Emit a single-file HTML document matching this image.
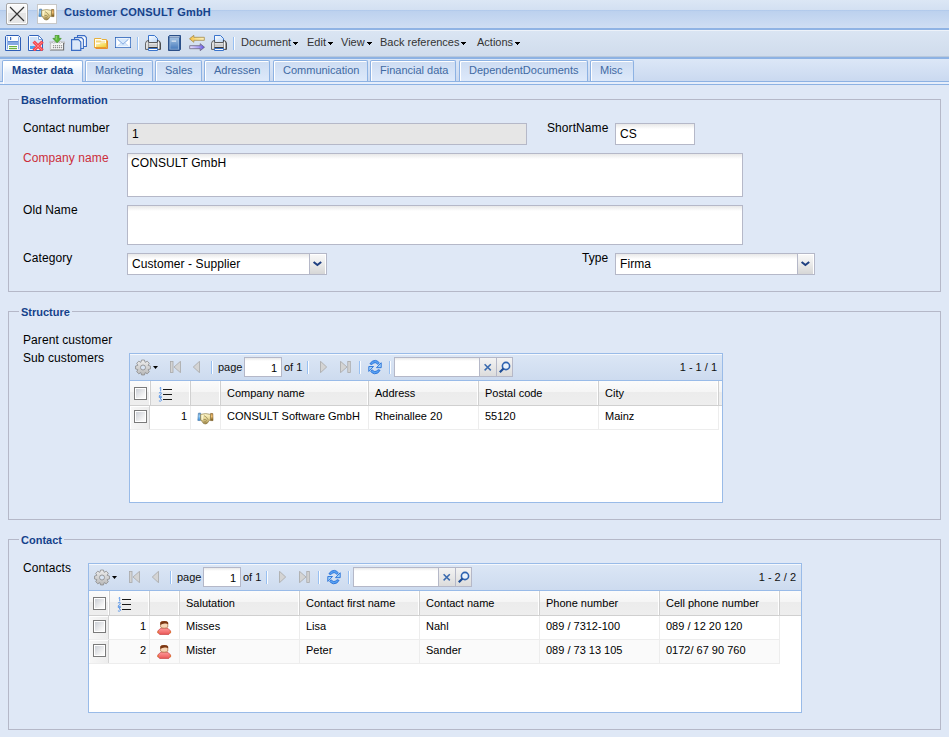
<!DOCTYPE html>
<html><head><meta charset="utf-8">
<style>
*{box-sizing:border-box;margin:0;padding:0}
html,body{width:949px;height:737px;overflow:hidden;background:#dfe8f6;font-family:"Liberation Sans",sans-serif;}
.a{position:absolute}
.t{position:absolute;white-space:nowrap;line-height:1}
#hdr{left:0;top:0;width:949px;height:30px;background:linear-gradient(#dce7f5 0,#d3e0f2 10px,#a9c4e9 10px,#bcd1ee 11px,#cfdef3 28px,#8fb3e4 28px,#8fb3e4 30px);}
#tb{left:0;top:30px;width:949px;height:27px;background:linear-gradient(#edf2f9 0,#edf2f9 1px,#dae5f3 1px,#d0dcec 26px,#b8c8dc 26px);}
#tabs{left:0;top:57px;width:949px;height:28px;background:linear-gradient(#8db2e3 0,#8db2e3 2px,#dce7f7 2px,#cad9f0 24px,#8db2e3 24px,#8db2e3 25px,#e6eefb 25px,#e6eefb 27px,#8db2e3 27px);}
.fs{position:absolute;border:1px solid #b5b8c8;}
.lg{position:absolute;font-weight:bold;font-size:11px;color:#15428b;background:#dfe8f6;padding:0 2px 0 2px;line-height:1}
.lbl{position:absolute;font-size:12px;color:#000;line-height:1;white-space:nowrap;letter-spacing:.08px}
.fld{position:absolute;border:1px solid #b5b8c8;background:#fff linear-gradient(#e8e8e8,#fff 5px);font-size:12px;color:#000}
.fld span{position:absolute;left:4px;line-height:1;white-space:nowrap;letter-spacing:.08px}
.trig{position:absolute;right:-1px;top:-1px;width:18px;bottom:-1px;border:1px solid #b5b8c8;background:linear-gradient(#f9f9f9,#ececec 45%,#d6d6d6);box-shadow:inset -1px 1px #fff}
.tab{position:absolute;top:60px;height:21px;border:1px solid #8db2e3;border-bottom:none;border-radius:2px 2px 0 0;background:linear-gradient(#cddcf2,#dde9fa);box-shadow:inset 1px 1px #fff;font-size:11px;color:#416aa3;}
.tab span{position:absolute;top:4px;line-height:1;white-space:nowrap;left:9px}
.tab.act{height:22px;background:linear-gradient(#ffffff 0,#fdfeff 4px,#e4eefb 12px,#dfeafb);color:#15428b;font-weight:bold}
.menu{position:absolute;top:37px;font-size:11px;color:#333;line-height:1;white-space:nowrap}
.arr{display:inline-block;margin-left:2px;vertical-align:1px}
.sep{position:absolute;width:2px;background:linear-gradient(90deg,#98c0f2 1px,#fbfdff 1px)}
.grid{position:absolute;border:1px solid #99bbe8;background:#fff;overflow:hidden}
.gtb{position:absolute;left:0;top:0;right:0;height:27px;border-bottom:1px solid #99bbe8;background:linear-gradient(#f5f8fd 0,#f5f8fd 1px,#dbe6f5 1px,#cddbef)}
.ghd{position:absolute;left:0;right:0;top:27px;height:25px;background:linear-gradient(#fbfbfb 0,#f5f5f5 11px,#ececec 11px,#eeeeee 24px);border-bottom:1px solid #d0d0d0}
.hc{position:absolute;top:0;height:24px;border-right:1px solid #d0d0d0;box-shadow:inset -1px 0 #fff;font-size:11px;color:#000}
.hc span{position:absolute;top:7px;left:6px;line-height:1;white-space:nowrap}
.rc span{position:absolute;top:5px;left:6px;line-height:1;white-space:nowrap}
.rck{background:linear-gradient(90deg,#f7f7f7,#ededed);box-shadow:inset 1px 1px #fff;border-right:1px solid #d4d4d4 !important}
.row{position:absolute;left:0;height:24px;border-bottom:1px solid #ededed}
.rc{position:absolute;top:0;height:23px;border-right:1px solid #ededed;font-size:11px;color:#000}
.cb{position:absolute;width:13px;height:13px;border:1px solid #7a7a7a;background:linear-gradient(135deg,#c6cad2,#f4f4f4 70%,#fff);box-shadow:inset 0 0 0 1px #fff}
.gt{position:absolute;top:8px;font-size:11px;color:#111;line-height:1;white-space:nowrap}
.pin{position:absolute;top:3px;height:20px;border:1px solid #b5b8c8;background:#fff linear-gradient(#e9e9e9,#fff 3px);font-size:11px;color:#000}
.pin span{position:absolute;top:5px;line-height:1}
.strig{position:absolute;top:3px;width:17px;height:20px;border:1px solid #b5b8c8;background:linear-gradient(#f3f3f3,#dcdcdc);}
.strig svg{position:absolute;left:0;top:0}
</style></head>
<body>
<!-- header -->
<div id="hdr" class="a"></div>
<div class="a" style="left:6px;top:3px;width:22px;height:22px;border:1px solid #a8a8a8;border-radius:2px;box-shadow:inset 0 0 0 1px #fff;background:linear-gradient(#fafafa 0,#f2f2f2 9px,#e4e4e4 9px,#e6e6e6)">
<svg width="20" height="20" style="position:absolute;left:0;top:0"><path d="M3 3L17 17M17 3L3 17" stroke="#333" stroke-width="1.2"/></svg></div>
<div class="a" style="left:37px;top:4px;width:20px;height:20px;border:1px solid #c8c8c8;background:#fff"></div>
<svg class="a" style="left:38px;top:8px" width="17" height="13" viewBox="0 0 17 13"><defs><linearGradient id="hh1" x1="0" y1="0" x2="0" y2="1"><stop offset="0" stop-color="#fff8cc"/><stop offset=".45" stop-color="#eadb9c"/><stop offset="1" stop-color="#a48a48"/></linearGradient><linearGradient id="hh1b" x1="0" y1="0" x2="0" y2="1"><stop offset="0" stop-color="#5a8ec0"/><stop offset=".4" stop-color="#9ad4fa"/><stop offset="1" stop-color="#3a8ad8"/></linearGradient><linearGradient id="hh1o" x1="0" y1="0" x2="0" y2="1"><stop offset="0" stop-color="#c08840"/><stop offset=".4" stop-color="#fcc878"/><stop offset="1" stop-color="#6a5010"/></linearGradient></defs><path d="M1.4 1.2L3.6 1L3.4 8.6L.8 8.4Z" fill="url(#hh1b)" stroke="#4a78a8" stroke-width=".6"/><path d="M13.6 1.4L15.8 1.6L16 8.6L13.4 8.6Z" fill="url(#hh1o)" stroke="#7a5a20" stroke-width=".6"/><path d="M3.7 2.4Q8.5 .8 13.5 2.4L13.4 7.6Q12.2 8.4 11.6 9.4Q10.3 12.1 8.2 12Q5.8 11.8 5.2 9.6Q4 8.6 3.6 8Z" fill="url(#hh1)" stroke="#7a6a38" stroke-width=".6"/><path d="M5.2 3.2V8" stroke="#fffbe0" stroke-width="1"/><path d="M7 3.6Q9.5 4.6 11.2 7.8M6.6 7.6Q8.2 6.6 9.8 8.6M7.2 10Q8.5 9.2 9.5 10.6" fill="none" stroke="#8a7a48" stroke-width=".7"/></svg>
<div class="t" style="left:64px;top:7px;font-size:11px;font-weight:bold;color:#15428b;letter-spacing:.2px">Customer CONSULT GmbH</div>

<!-- toolbar -->
<div id="tb" class="a"></div>

<!-- toolbar icons -->
<svg class="a" style="left:5px;top:35px" width="16" height="16" viewBox="0 0 16 16">
 <path d="M1.5 .5H13.5L15.5 2.5V15.5H.5V1.5Z" fill="#e4edfa" stroke="#2d5db6" stroke-width="1"/>
 <rect x="2" y="2" width="1" height="12" fill="#8eb0e8"/><rect x="13" y="2" width="1" height="12" fill="#8eb0e8"/>
 <rect x="3" y="1" width="10" height="5" fill="#fbfcfe"/>
 <rect x="5" y="2" width="1.2" height="3" fill="#3f6fc2"/>
 <rect x="3" y="6" width="10" height="1" fill="#5f8ad2"/>
 <rect x="3" y="7" width="10" height="3" fill="#86a9e2"/>
 <rect x="3" y="10" width="10" height="5" fill="#ffffff"/>
 <rect x="4" y="11" width="8" height="1.2" fill="#6cb342"/>
 <rect x="4" y="13" width="8" height="1.2" fill="#6cb342"/>
</svg>
<svg class="a" style="left:28px;top:35px" width="16" height="16" viewBox="0 0 16 16">
 <path d="M1.5 .5H10.5L14.5 4.5V15.5H.5V1.5Z" fill="#fafcff" stroke="#2f62bc" stroke-width="1"/>
 <path d="M2 2H9.5V5H13.5V12H2Z" fill="#cfe1f7"/>
 <path d="M10.5 1V4.5H14" fill="#fff" stroke="#5a8ad0" stroke-width=".8"/>
 <rect x="2" y="11" width="5" height="3" fill="#4aa2f0"/>
 <path d="M5.6 6.6L14.6 15.4M14.6 6.6L5.6 15.4" stroke="#f5484e" stroke-width="3.3"/>
 <path d="M6.2 7.2L14 14.8M14 7.2L6.2 14.8" stroke="#ff8084" stroke-width="1"/>
</svg>
<svg class="a" style="left:49px;top:35px" width="16" height="16" viewBox="0 0 16 16">
 <path d="M.3 7.2H15.7V8.6H15V9.3" fill="none" stroke="#bdbdbd" stroke-width="1.2"/>
 <path d="M1.5 8.5V15H14.6V8" fill="#f6f6f6" stroke="#6e6e6e" stroke-width="1.1"/>
 <path d="M1.5 8.5V15" stroke="#c8c8c8" stroke-width="1.1"/>
 <g fill="#8c8c8c"><rect x="3.9" y="10.1" width="1.2" height="1.2"/><rect x="5.9" y="10.1" width="1.2" height="1.2"/><rect x="7.9" y="10.1" width="1.2" height="1.2"/><rect x="9.9" y="10.1" width="1.2" height="1.2"/><rect x="11.9" y="10.1" width="1.2" height="1.2"/>
 <rect x="3.9" y="12" width="1.2" height="1.2"/><rect x="5.9" y="12" width="1.2" height="1.2"/><rect x="7.9" y="12" width="1.2" height="1.2"/><rect x="9.9" y="12" width="1.2" height="1.2"/><rect x="11.9" y="12" width="1.2" height="1.2"/></g>
 <circle cx="4.8" cy="7.3" r="1" fill="#fff" stroke="#999" stroke-width=".5"/><circle cx="11.4" cy="7.3" r="1" fill="#fff" stroke="#999" stroke-width=".5"/>
 <path d="M6.2 .2H10V3.4H12.2L8.1 7.8L3.9 3.4H6.2Z" fill="#5db83a" stroke="#3d8e22" stroke-width=".7"/>
 <path d="M7.2 1V4.8" stroke="#a8e090" stroke-width=".8"/>
</svg>
<svg class="a" style="left:71px;top:35px" width="16" height="16" viewBox="0 0 16 16">
 <path d="M6.5 .6H13.5L15.4 2.5V11.5H6.5Z" fill="#f4f8fe" stroke="#3a6cc4" stroke-width="1.1"/>
 <path d="M3.5 2.6H10.5L12.4 4.5V13.5H3.5Z" fill="#f4f8fe" stroke="#3a6cc4" stroke-width="1.1"/>
 <path d="M.6 4.6H7.5L9.8 6.9V15.4H.6Z" fill="#dbe8f9" stroke="#3a6cc4" stroke-width="1.2"/>
</svg>
<svg class="a" style="left:93px;top:37px" width="16" height="13" viewBox="0 0 16 13">
 <defs><linearGradient id="fg" x1="0" y1="0" x2="1" y2="1"><stop offset="0" stop-color="#fdf3c0"/><stop offset="1" stop-color="#f2cf2a"/></linearGradient></defs>
 <path d="M2.5 11.5H14.5V3.5" fill="none" stroke="#e8902e" stroke-width="1"/>
 <path d="M1.5 1.5H8L9 2.5H13.5V10.5H1.5Z" fill="#fffdf2" stroke="#e6b03e" stroke-width="1"/>
 <path d="M3 3.5H7.5L8.5 4.5H12V5.5H3Z" fill="#f3d67a"/>
 <path d="M3 7H6.5L7.5 6H13V10H3Z" fill="url(#fg)"/>
 <path d="M1.5 10.5H13.5" stroke="#e89a30" stroke-width="1"/>
</svg>
<svg class="a" style="left:115px;top:37px" width="16" height="11" viewBox="0 0 16 11">
 <rect x=".5" y=".5" width="15" height="10" fill="#ffffff" stroke="#2f64b8" stroke-width="1"/>
 <path d="M1 1.2H15V10H1Z" fill="none" stroke="#cfe2fb" stroke-width=".6"/>
 <path d="M2.5 9L7 6L9 6L13.5 9M2.5 2L8 7L13.5 2Z" fill="#d6e8fc"/>
 <path d="M2.5 2.2L8 7.2L13.5 2.2" fill="none" stroke="#7aa4e0" stroke-width="1"/>
 <path d="M2.5 9L6 6M13.5 9L10 6" fill="none" stroke="#b4cff2" stroke-width=".8"/>
</svg>
<svg class="a" style="left:145px;top:35px" width="16" height="16" viewBox="0 0 16 16">
 <defs><linearGradient id="paa" x1="0" y1="0" x2="1" y2="0"><stop offset="0" stop-color="#bbb"/><stop offset=".4" stop-color="#fff"/><stop offset="1" stop-color="#aaa"/></linearGradient>
 <linearGradient id="pab" x1="0" y1="0" x2="1" y2="0"><stop offset="0" stop-color="#ccc"/><stop offset=".45" stop-color="#fff"/><stop offset="1" stop-color="#444"/></linearGradient>
 <linearGradient id="pac" x1="0" y1="0" x2="0" y2="1"><stop offset="0" stop-color="#fafafa"/><stop offset=".5" stop-color="#c6c6c6"/><stop offset="1" stop-color="#e6e6e6"/></linearGradient>
 <linearGradient id="pap" x1="0" y1="0" x2="1" y2="1"><stop offset="0" stop-color="#ffffff"/><stop offset="1" stop-color="#b8d4f6"/></linearGradient></defs>
 <path d="M3.5 .5H9.5L12.5 3.5V8H3.5Z" fill="url(#pap)" stroke="#3a74cc" stroke-width="1"/>
 <path d="M.6 14.4V8.3Q.8 5.6 3.6 5.4V14.4Z" fill="url(#paa)" stroke="#3c3c3c" stroke-width=".8"/>
 <path d="M15.4 14.4V8.3Q15.2 5.6 12.4 5.4V14.4Z" fill="url(#pab)" stroke="#2a2a2a" stroke-width=".8"/>
 <rect x="3.5" y="7" width="9" height="6.5" fill="url(#pac)"/>
 <rect x="3.5" y="7" width="9" height="1" fill="#5a5a5a"/>
 <rect x="3.5" y="12" width="9" height="1" fill="#3a3a3a"/>
 <path d="M3.5 13.5H12.5V15.5H3.5Z" fill="#fafafa" stroke="#3a74cc" stroke-width="1"/>
</svg>
<svg class="a" style="left:168px;top:35px" width="13" height="16" viewBox="0 0 13 16">
 <defs><linearGradient id="bk" x1="0" y1="0" x2="0" y2="1"><stop offset="0" stop-color="#9cbde0"/><stop offset="1" stop-color="#4a7dbd"/></linearGradient></defs>
 <path d="M1.5 .5H12.5V14.5L11.5 15.5H.5V1.5Z" fill="#34609e" stroke="#2a4f88" stroke-width="1"/>
 <rect x="1.5" y="1.4" width="10" height="1" fill="#f4f7fb"/>
 <rect x="1.5" y="3" width="9.5" height="11.5" fill="#9dbcdf"/>
 <rect x="2.3" y="3.8" width="8" height="10" fill="url(#bk)"/>
 <rect x="3.6" y="5.6" width="4.5" height="1" fill="#f0f5fb"/>
</svg>
<svg class="a" style="left:189px;top:35px" width="16" height="16" viewBox="0 0 16 16">
 <defs><linearGradient id="ay" x1="0" y1="0" x2="1" y2="0"><stop offset="0" stop-color="#f4b838"/><stop offset=".4" stop-color="#fbdc80"/><stop offset="1" stop-color="#fdf2c0"/></linearGradient>
 <linearGradient id="ap" x1="0" y1="0" x2="1" y2="0"><stop offset="0" stop-color="#e6e2ff"/><stop offset=".6" stop-color="#a89cf4"/><stop offset="1" stop-color="#5a4ae0"/></linearGradient></defs>
 <path d="M.5 3.8L4.8 .3V2.3H15.3V5.3H4.8V7.3Z" fill="url(#ay)" stroke="#a58a4a" stroke-width=".8" stroke-linejoin="round"/>
 <path d="M15.5 12.2L11.2 8.7V10.7H.7V13.7H11.2V15.7Z" fill="url(#ap)" stroke="#6a6480" stroke-width=".8" stroke-linejoin="round"/>
</svg>
<svg class="a" style="left:211px;top:35px" width="16" height="16" viewBox="0 0 16 16">
 <defs><linearGradient id="pba" x1="0" y1="0" x2="1" y2="0"><stop offset="0" stop-color="#bbb"/><stop offset=".4" stop-color="#fff"/><stop offset="1" stop-color="#aaa"/></linearGradient>
 <linearGradient id="pbb" x1="0" y1="0" x2="1" y2="0"><stop offset="0" stop-color="#ccc"/><stop offset=".45" stop-color="#fff"/><stop offset="1" stop-color="#444"/></linearGradient>
 <linearGradient id="pbc" x1="0" y1="0" x2="0" y2="1"><stop offset="0" stop-color="#fafafa"/><stop offset=".5" stop-color="#c6c6c6"/><stop offset="1" stop-color="#e6e6e6"/></linearGradient>
 <linearGradient id="pbp" x1="0" y1="0" x2="1" y2="1"><stop offset="0" stop-color="#ffffff"/><stop offset="1" stop-color="#b8d4f6"/></linearGradient></defs>
 <path d="M3.5 .5H9.5L12.5 3.5V8H3.5Z" fill="url(#pbp)" stroke="#3a74cc" stroke-width="1"/>
 <path d="M.6 14.4V8.3Q.8 5.6 3.6 5.4V14.4Z" fill="url(#pba)" stroke="#3c3c3c" stroke-width=".8"/>
 <path d="M15.4 14.4V8.3Q15.2 5.6 12.4 5.4V14.4Z" fill="url(#pbb)" stroke="#2a2a2a" stroke-width=".8"/>
 <rect x="3.5" y="7" width="9" height="6.5" fill="url(#pbc)"/>
 <rect x="3.5" y="7" width="9" height="1" fill="#5a5a5a"/>
 <rect x="3.5" y="12" width="9" height="1" fill="#3a3a3a"/>
 <path d="M3.5 13.5H12.5V15.5H3.5Z" fill="#fafafa" stroke="#3a74cc" stroke-width="1"/>
</svg>
<div class="sep" style="left:137px;top:37px;height:13px"></div>
<div class="sep" style="left:233px;top:37px;height:13px"></div>
<div class="menu" style="left:241px">Document<svg class="arr" width="5" height="3" viewBox="0 0 5 3"><rect x="0" y="0" width="5" height="1" fill="#000"/><rect x="1" y="1" width="3" height="1" fill="#000"/><rect x="2" y="2" width="1" height="1" fill="#000"/></svg></div>
<div class="menu" style="left:307px">Edit<svg class="arr" width="5" height="3" viewBox="0 0 5 3"><rect x="0" y="0" width="5" height="1" fill="#000"/><rect x="1" y="1" width="3" height="1" fill="#000"/><rect x="2" y="2" width="1" height="1" fill="#000"/></svg></div>
<div class="menu" style="left:341px">View<svg class="arr" width="5" height="3" viewBox="0 0 5 3"><rect x="0" y="0" width="5" height="1" fill="#000"/><rect x="1" y="1" width="3" height="1" fill="#000"/><rect x="2" y="2" width="1" height="1" fill="#000"/></svg></div>
<div class="menu" style="left:380px">Back references<svg class="arr" width="5" height="3" viewBox="0 0 5 3"><rect x="0" y="0" width="5" height="1" fill="#000"/><rect x="1" y="1" width="3" height="1" fill="#000"/><rect x="2" y="2" width="1" height="1" fill="#000"/></svg></div>
<div class="menu" style="left:477px">Actions<svg class="arr" width="5" height="3" viewBox="0 0 5 3"><rect x="0" y="0" width="5" height="1" fill="#000"/><rect x="1" y="1" width="3" height="1" fill="#000"/><rect x="2" y="2" width="1" height="1" fill="#000"/></svg></div>

<!-- tabs -->
<div id="tabs" class="a"></div>
<div class="tab act" style="left:2px;width:81px"><span style="left:9px">Master data</span></div>
<div class="a" style="left:3px;top:81px;width:79px;height:3px;background:linear-gradient(#dfeafb 0,#dfeafb 1px,#e6eefb 1px);box-shadow:inset 1px 0 #fff"></div>
<div class="tab" style="left:85px;width:68px"><span>Marketing</span></div>
<div class="tab" style="left:155px;width:47px"><span>Sales</span></div>
<div class="tab" style="left:204px;width:66px"><span>Adressen</span></div>
<div class="tab" style="left:273px;width:95px"><span>Communication</span></div>
<div class="tab" style="left:370px;width:86px"><span>Financial data</span></div>
<div class="tab" style="left:459px;width:129px"><span>DependentDocuments</span></div>
<div class="tab" style="left:590px;width:44px"><span>Misc</span></div>

<!-- fieldset 1 -->
<div class="fs" style="left:8px;top:99px;width:933px;height:193px"></div>
<div class="lg" style="left:19px;top:95px">BaseInformation</div>
<div class="lbl" style="left:23px;top:122px">Contact number</div>
<div class="fld" style="left:127px;top:123px;width:400px;height:22px;background:#e6e6e6"><span style="top:4px">1</span></div>
<div class="lbl" style="left:547px;top:122px">ShortName</div>
<div class="fld" style="left:615px;top:123px;width:80px;height:22px"><span style="top:4px">CS</span></div>
<div class="lbl" style="left:23px;top:152px;color:#cc2e3a">Company name</div>
<div class="fld" style="left:127px;top:153px;width:616px;height:44px"><span style="top:3px;left:3px">CONSULT GmbH</span></div>
<div class="lbl" style="left:23px;top:204px">Old Name</div>
<div class="fld" style="left:127px;top:205px;width:616px;height:40px"></div>
<div class="lbl" style="left:23px;top:252px">Category</div>
<div class="fld" style="left:127px;top:253px;width:200px;height:22px"><span style="top:4px">Customer - Supplier</span><div class="trig"><svg width="17" height="22" viewBox="0 0 17 22" style="position:absolute;left:0;top:0"><path d="M3.6 7.9L7.4 11L11.2 7.9" fill="none" stroke="#1f3f80" stroke-width="2"/></svg></div></div>
<div class="lbl" style="left:582px;top:252px">Type</div>
<div class="fld" style="left:615px;top:253px;width:200px;height:22px"><span style="top:4px">Firma</span><div class="trig"><svg width="17" height="22" viewBox="0 0 17 22" style="position:absolute;left:0;top:0"><path d="M3.6 7.9L7.4 11L11.2 7.9" fill="none" stroke="#1f3f80" stroke-width="2"/></svg></div></div>

<!-- fieldset 2 -->
<div class="fs" style="left:8px;top:311px;width:933px;height:209px"></div>
<div class="lg" style="left:19px;top:307px">Structure</div>
<div class="lbl" style="left:23px;top:334px">Parent customer</div>
<div class="lbl" style="left:23px;top:352px">Sub customers</div>

<div class="grid" style="left:129px;top:353px;width:594px;height:150px">
 <div class="gtb">
  <svg class="a" style="left:4px;top:5px" width="28" height="17" viewBox="0 0 28 17"><defs><linearGradient id="gg" x1="0" y1="0" x2="0" y2="1"><stop offset="0" stop-color="#eeeeee"/><stop offset="1" stop-color="#b8b8b8"/></linearGradient></defs><g transform="translate(9,8.5)"><path d="M-2.10 -5.19L-1.45 -7.46L1.45 -7.46L2.10 -5.19L2.19 -5.15L4.25 -6.30L6.30 -4.25L5.15 -2.19L5.19 -2.10L7.46 -1.45L7.46 1.45L5.19 2.10L5.15 2.19L6.30 4.25L4.25 6.30L2.19 5.15L2.10 5.19L1.45 7.46L-1.45 7.46L-2.10 5.19L-2.19 5.15L-4.25 6.30L-6.30 4.25L-5.15 2.19L-5.19 2.10L-7.46 1.45L-7.46 -1.45L-5.19 -2.10L-5.15 -2.19L-6.30 -4.25L-4.25 -6.30L-2.19 -5.15Z" fill="url(#gg)" stroke="#8a8a8a" stroke-width=".8" stroke-linejoin="round"/><circle r="2.5" fill="#d8e4f3" stroke="#8a8a8a" stroke-width=".8"/></g><path d="M19 7H24L21.5 10Z" fill="#000"/></svg>
  <svg class="a" style="left:40px;top:7px" width="11" height="12" viewBox="0 0 11 12"><rect x=".5" y=".5" width="2.5" height="11" fill="#d4d4d4" stroke="#a8a8a8" stroke-width=".8"/><path d="M10.5 .3V11.7L4 6Z" fill="#d4d4d4" stroke="#a8a8a8" stroke-width=".8"/></svg>
  <svg class="a" style="left:63px;top:7px" width="7" height="12" viewBox="0 0 7 12"><path d="M6.5 .3V11.7L.3 6Z" fill="#d4d4d4" stroke="#a8a8a8" stroke-width=".8"/></svg>
  <div class="sep" style="left:81px;top:7px;height:13px"></div>
  <div class="gt" style="left:88px">page</div>
  <div class="pin" style="left:114px;width:38px"><span style="right:4px">1</span></div>
  <div class="gt" style="left:154px">of 1</div>
  <div class="sep" style="left:177px;top:7px;height:13px"></div>
  <svg class="a" style="left:190px;top:7px" width="7" height="12" viewBox="0 0 7 12"><path d="M.5 .3V11.7L6.7 6Z" fill="#d4d4d4" stroke="#a8a8a8" stroke-width=".8"/></svg>
  <svg class="a" style="left:210px;top:7px" width="11" height="12" viewBox="0 0 11 12"><path d="M.5 .3V11.7L7 6Z" fill="#d4d4d4" stroke="#a8a8a8" stroke-width=".8"/><rect x="7.8" y=".5" width="2.5" height="11" fill="#d4d4d4" stroke="#a8a8a8" stroke-width=".8"/></svg>
  <div class="sep" style="left:229px;top:7px;height:13px"></div>
  <svg class="a" style="left:237px;top:5px" width="16" height="16" viewBox="-.5 -.6 17 17"><g stroke="#2a72d8" stroke-width="1" stroke-linejoin="round"><path d="M2.6 4.6Q4.6 .6 8.5 .9Q11.2 1.2 12.6 3.6L11 5.2Q9.8 3.4 8.2 3.3Q5.9 3.2 4.9 5.2Z" fill="#58a2f4"/><path d="M9.6 8.6H14.6V3.4Z" fill="#9fd2fb"/><path d="M13.4 11.4Q11.4 15.4 7.5 15.1Q4.8 14.8 3.4 12.4L5 10.8Q6.2 12.6 7.8 12.7Q10.1 12.8 11.1 10.8Z" fill="#58a2f4"/><path d="M6.4 7.4H1.4V12.6Z" fill="#9fd2fb"/></g></svg>
  <div class="sep" style="left:259px;top:7px;height:13px"></div>
  <div class="pin" style="left:264px;width:86px"></div>
  <div class="strig" style="left:349px;width:18px"><svg width="16" height="19" viewBox="0 0 16 19"><path d="M4.6 6.2L10.8 12.4M10.8 6.2L4.6 12.4" stroke="#3a6aae" stroke-width="1.5"/></svg></div>
  <div class="strig" style="left:366px"><svg width="16" height="19" viewBox="0 0 16 19"><circle cx="9" cy="8" r="3.6" fill="#e9f2fb" stroke="#2d62b0" stroke-width="1.6"/><path d="M6.5 10.5L2.8 14.3" stroke="#1e4d96" stroke-width="2.2"/></svg></div>
  <div class="gt" style="right:5px">1 - 1 / 1</div>
 </div>
 <div class="ghd">
  <div class="hc hck" style="left:0;width:21px"><div class="cb" style="left:4px;top:6px"></div></div>
  <div class="hc" style="left:21px;width:40px"><svg class="a" style="left:7px;top:6px" width="16" height="16" viewBox="0 0 16 16"><g fill="none" stroke="#4f8fe6" stroke-width=".9"><path d="M1.6 1.1L2.7 .4V4.4"/><path d="M.9 6.1Q2.2 4.9 3.4 5.9Q3.6 7.1 .9 9.3H3.8"/><path d="M.9 10.4H3.5L2.1 11.9Q3.8 11.9 3.6 13.4Q2.6 14.7 .9 13.9"/></g><g fill="#1a1a1a"><rect x="5" y="2" width="9" height="1"/><rect x="5" y="7" width="9" height="1"/><rect x="5" y="12" width="9" height="1"/></g></svg></div>
  <div class="hc" style="left:61px;width:30px"></div>
  <div class="hc" style="left:91px;width:148px"><span>Company name</span></div>
  <div class="hc" style="left:239px;width:110px"><span>Address</span></div>
  <div class="hc" style="left:349px;width:120px"><span>Postal code</span></div>
  <div class="hc" style="left:469px;width:120px"><span>City</span></div>
 </div>
 <div class="row" style="top:52px;width:589px">
  <div class="rc rck" style="left:0;width:20px"><div class="cb" style="left:4px;top:4px"></div></div>
  <div class="rc" style="left:21px;width:40px"><span style="left:auto;right:3px">1</span></div>
  <div class="rc" style="left:61px;width:30px"><svg class="a" style="left:6px;top:6px" width="17" height="13" viewBox="0 0 17 13"><defs><linearGradient id="hh2" x1="0" y1="0" x2="0" y2="1"><stop offset="0" stop-color="#fff8cc"/><stop offset=".45" stop-color="#eadb9c"/><stop offset="1" stop-color="#a48a48"/></linearGradient><linearGradient id="hh2b" x1="0" y1="0" x2="0" y2="1"><stop offset="0" stop-color="#5a8ec0"/><stop offset=".4" stop-color="#9ad4fa"/><stop offset="1" stop-color="#3a8ad8"/></linearGradient><linearGradient id="hh2o" x1="0" y1="0" x2="0" y2="1"><stop offset="0" stop-color="#c08840"/><stop offset=".4" stop-color="#fcc878"/><stop offset="1" stop-color="#6a5010"/></linearGradient></defs><path d="M1.4 1.2L3.6 1L3.4 8.6L.8 8.4Z" fill="url(#hh2b)" stroke="#4a78a8" stroke-width=".6"/><path d="M13.6 1.4L15.8 1.6L16 8.6L13.4 8.6Z" fill="url(#hh2o)" stroke="#7a5a20" stroke-width=".6"/><path d="M3.7 2.4Q8.5 .8 13.5 2.4L13.4 7.6Q12.2 8.4 11.6 9.4Q10.3 12.1 8.2 12Q5.8 11.8 5.2 9.6Q4 8.6 3.6 8Z" fill="url(#hh2)" stroke="#7a6a38" stroke-width=".6"/><path d="M5.2 3.2V8" stroke="#fffbe0" stroke-width="1"/><path d="M7 3.6Q9.5 4.6 11.2 7.8M6.6 7.6Q8.2 6.6 9.8 8.6M7.2 10Q8.5 9.2 9.5 10.6" fill="none" stroke="#8a7a48" stroke-width=".7"/></svg></div>
  <div class="rc" style="left:91px;width:148px"><span>CONSULT Software GmbH</span></div>
  <div class="rc" style="left:239px;width:110px"><span>Rheinallee 20</span></div>
  <div class="rc" style="left:349px;width:120px"><span>55120</span></div>
  <div class="rc" style="left:469px;width:120px"><span>Mainz</span></div>
 </div>
</div>

<!-- fieldset 3 -->
<div class="fs" style="left:8px;top:539px;width:933px;height:191px"></div>
<div class="lg" style="left:19px;top:535px">Contact</div>
<div class="lbl" style="left:23px;top:562px">Contacts</div>

<div class="grid" style="left:88px;top:563px;width:714px;height:150px">
 <div class="gtb">
  <svg class="a" style="left:4px;top:5px" width="28" height="17" viewBox="0 0 28 17"><defs><linearGradient id="gg" x1="0" y1="0" x2="0" y2="1"><stop offset="0" stop-color="#eeeeee"/><stop offset="1" stop-color="#b8b8b8"/></linearGradient></defs><g transform="translate(9,8.5)"><path d="M-2.10 -5.19L-1.45 -7.46L1.45 -7.46L2.10 -5.19L2.19 -5.15L4.25 -6.30L6.30 -4.25L5.15 -2.19L5.19 -2.10L7.46 -1.45L7.46 1.45L5.19 2.10L5.15 2.19L6.30 4.25L4.25 6.30L2.19 5.15L2.10 5.19L1.45 7.46L-1.45 7.46L-2.10 5.19L-2.19 5.15L-4.25 6.30L-6.30 4.25L-5.15 2.19L-5.19 2.10L-7.46 1.45L-7.46 -1.45L-5.19 -2.10L-5.15 -2.19L-6.30 -4.25L-4.25 -6.30L-2.19 -5.15Z" fill="url(#gg)" stroke="#8a8a8a" stroke-width=".8" stroke-linejoin="round"/><circle r="2.5" fill="#d8e4f3" stroke="#8a8a8a" stroke-width=".8"/></g><path d="M19 7H24L21.5 10Z" fill="#000"/></svg>
  <svg class="a" style="left:40px;top:7px" width="11" height="12" viewBox="0 0 11 12"><rect x=".5" y=".5" width="2.5" height="11" fill="#d4d4d4" stroke="#a8a8a8" stroke-width=".8"/><path d="M10.5 .3V11.7L4 6Z" fill="#d4d4d4" stroke="#a8a8a8" stroke-width=".8"/></svg>
  <svg class="a" style="left:63px;top:7px" width="7" height="12" viewBox="0 0 7 12"><path d="M6.5 .3V11.7L.3 6Z" fill="#d4d4d4" stroke="#a8a8a8" stroke-width=".8"/></svg>
  <div class="sep" style="left:81px;top:7px;height:13px"></div>
  <div class="gt" style="left:88px">page</div>
  <div class="pin" style="left:114px;width:38px"><span style="right:4px">1</span></div>
  <div class="gt" style="left:154px">of 1</div>
  <div class="sep" style="left:177px;top:7px;height:13px"></div>
  <svg class="a" style="left:190px;top:7px" width="7" height="12" viewBox="0 0 7 12"><path d="M.5 .3V11.7L6.7 6Z" fill="#d4d4d4" stroke="#a8a8a8" stroke-width=".8"/></svg>
  <svg class="a" style="left:210px;top:7px" width="11" height="12" viewBox="0 0 11 12"><path d="M.5 .3V11.7L7 6Z" fill="#d4d4d4" stroke="#a8a8a8" stroke-width=".8"/><rect x="7.8" y=".5" width="2.5" height="11" fill="#d4d4d4" stroke="#a8a8a8" stroke-width=".8"/></svg>
  <div class="sep" style="left:229px;top:7px;height:13px"></div>
  <svg class="a" style="left:237px;top:5px" width="16" height="16" viewBox="-.5 -.6 17 17"><g stroke="#2a72d8" stroke-width="1" stroke-linejoin="round"><path d="M2.6 4.6Q4.6 .6 8.5 .9Q11.2 1.2 12.6 3.6L11 5.2Q9.8 3.4 8.2 3.3Q5.9 3.2 4.9 5.2Z" fill="#58a2f4"/><path d="M9.6 8.6H14.6V3.4Z" fill="#9fd2fb"/><path d="M13.4 11.4Q11.4 15.4 7.5 15.1Q4.8 14.8 3.4 12.4L5 10.8Q6.2 12.6 7.8 12.7Q10.1 12.8 11.1 10.8Z" fill="#58a2f4"/><path d="M6.4 7.4H1.4V12.6Z" fill="#9fd2fb"/></g></svg>
  <div class="sep" style="left:259px;top:7px;height:13px"></div>
  <div class="pin" style="left:264px;width:86px"></div>
  <div class="strig" style="left:349px;width:18px"><svg width="16" height="19" viewBox="0 0 16 19"><path d="M4.6 6.2L10.8 12.4M10.8 6.2L4.6 12.4" stroke="#3a6aae" stroke-width="1.5"/></svg></div>
  <div class="strig" style="left:366px"><svg width="16" height="19" viewBox="0 0 16 19"><circle cx="9" cy="8" r="3.6" fill="#e9f2fb" stroke="#2d62b0" stroke-width="1.6"/><path d="M6.5 10.5L2.8 14.3" stroke="#1e4d96" stroke-width="2.2"/></svg></div>
  <div class="gt" style="right:5px">1 - 2 / 2</div>
 </div>
 <div class="ghd">
  <div class="hc hck" style="left:0;width:21px"><div class="cb" style="left:4px;top:6px"></div></div>
  <div class="hc" style="left:21px;width:40px"><svg class="a" style="left:7px;top:6px" width="16" height="16" viewBox="0 0 16 16"><g fill="none" stroke="#4f8fe6" stroke-width=".9"><path d="M1.6 1.1L2.7 .4V4.4"/><path d="M.9 6.1Q2.2 4.9 3.4 5.9Q3.6 7.1 .9 9.3H3.8"/><path d="M.9 10.4H3.5L2.1 11.9Q3.8 11.9 3.6 13.4Q2.6 14.7 .9 13.9"/></g><g fill="#1a1a1a"><rect x="5" y="2" width="9" height="1"/><rect x="5" y="7" width="9" height="1"/><rect x="5" y="12" width="9" height="1"/></g></svg></div>
  <div class="hc" style="left:61px;width:30px"></div>
  <div class="hc" style="left:91px;width:120px"><span>Salutation</span></div>
  <div class="hc" style="left:211px;width:120px"><span>Contact first name</span></div>
  <div class="hc" style="left:331px;width:120px"><span>Contact name</span></div>
  <div class="hc" style="left:451px;width:120px"><span>Phone number</span></div>
  <div class="hc" style="left:571px;width:120px"><span>Cell phone number</span></div>
 </div>
 <div class="row" style="top:52px;width:691px">
  <div class="rc rck" style="left:0;width:20px"><div class="cb" style="left:4px;top:4px"></div></div>
  <div class="rc" style="left:21px;width:40px"><span style="left:auto;right:3px">1</span></div>
  <div class="rc" style="left:61px;width:30px"><svg class="a" style="left:7px;top:5px" width="15" height="15" viewBox="0 0 15 15"><defs><linearGradient id="pg" x1="0" y1="0" x2="0" y2="1"><stop offset="0" stop-color="#ff9c9c"/><stop offset="1" stop-color="#ec5a5a"/></linearGradient></defs><path d="M3.4 7.4Q5 6.8 7.2 6.8Q9.4 6.8 11 7.4L13.6 10V12L12.5 12.3L11.8 13.4H2.6L1.9 12.3L.8 12V10Z" fill="url(#pg)" stroke="#c43a3a" stroke-width=".7"/><path d="M1.2 10.3V12M13.2 10.3V12" stroke="#e58a22" stroke-width="1"/><path d="M3.6 1.8Q3.8 .3 7.2 .3Q10.6 .3 10.8 1.8V6Q9.8 7.2 7.2 7.2Q4.6 7.2 3.6 6Z" fill="#f7d6b6" stroke="#9a5a2a" stroke-width=".6"/><path d="M3.3 4V1.8Q3.6 0 7.2 0Q10.8 0 11.1 1.8V3.2Q9.6 2.2 7.7 2.5Q5.3 2.7 3.3 4Z" fill="#7c3612"/></svg></div>
  <div class="rc" style="left:91px;width:120px"><span>Misses</span></div>
  <div class="rc" style="left:211px;width:120px"><span>Lisa</span></div>
  <div class="rc" style="left:331px;width:120px"><span>Nahl</span></div>
  <div class="rc" style="left:451px;width:120px"><span>089 / 7312-100</span></div>
  <div class="rc" style="left:571px;width:120px"><span>089 / 12 20 120</span></div>
 </div>
 <div class="row" style="top:76px;width:691px;background:#fafafa">
  <div class="rc rck" style="left:0;width:20px"><div class="cb" style="left:4px;top:4px"></div></div>
  <div class="rc" style="left:21px;width:40px"><span style="left:auto;right:3px">2</span></div>
  <div class="rc" style="left:61px;width:30px"><svg class="a" style="left:7px;top:5px" width="15" height="15" viewBox="0 0 15 15"><defs><linearGradient id="pg" x1="0" y1="0" x2="0" y2="1"><stop offset="0" stop-color="#ff9c9c"/><stop offset="1" stop-color="#ec5a5a"/></linearGradient></defs><path d="M3.4 7.4Q5 6.8 7.2 6.8Q9.4 6.8 11 7.4L13.6 10V12L12.5 12.3L11.8 13.4H2.6L1.9 12.3L.8 12V10Z" fill="url(#pg)" stroke="#c43a3a" stroke-width=".7"/><path d="M1.2 10.3V12M13.2 10.3V12" stroke="#e58a22" stroke-width="1"/><path d="M3.6 1.8Q3.8 .3 7.2 .3Q10.6 .3 10.8 1.8V6Q9.8 7.2 7.2 7.2Q4.6 7.2 3.6 6Z" fill="#f7d6b6" stroke="#9a5a2a" stroke-width=".6"/><path d="M3.3 4V1.8Q3.6 0 7.2 0Q10.8 0 11.1 1.8V3.2Q9.6 2.2 7.7 2.5Q5.3 2.7 3.3 4Z" fill="#7c3612"/></svg></div>
  <div class="rc" style="left:91px;width:120px"><span>Mister</span></div>
  <div class="rc" style="left:211px;width:120px"><span>Peter</span></div>
  <div class="rc" style="left:331px;width:120px"><span>Sander</span></div>
  <div class="rc" style="left:451px;width:120px"><span>089 / 73 13 105</span></div>
  <div class="rc" style="left:571px;width:120px"><span>0172/ 67 90 760</span></div>
 </div>
</div>
</body></html>
